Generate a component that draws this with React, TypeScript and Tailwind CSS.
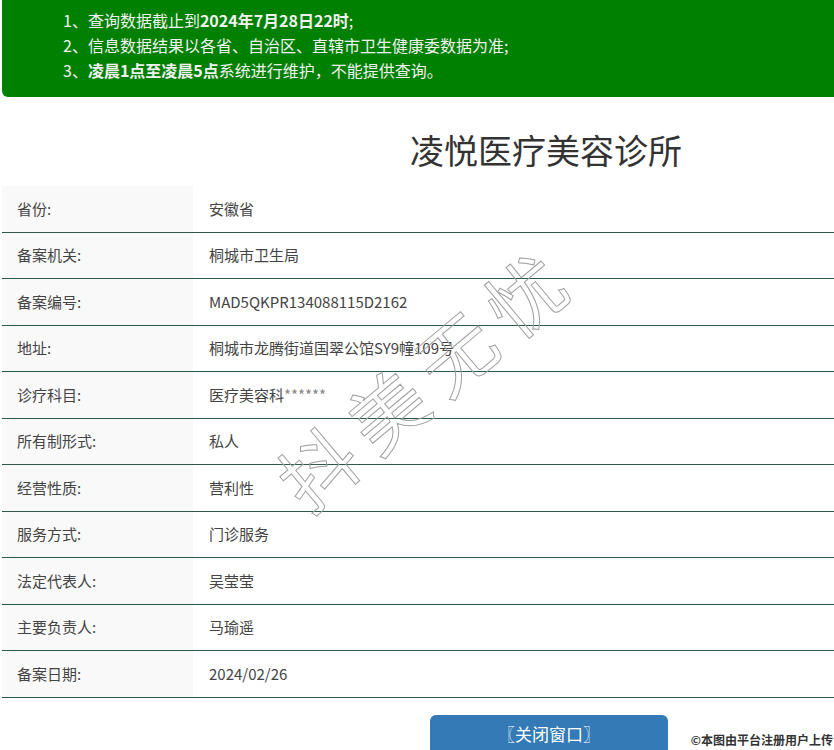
import React from "react";

const rows: [string, React.ReactNode][] = [
  ["省份:", "安徽省"],
  ["备案机关:", "桐城市卫生局"],
  ["备案编号:", "MAD5QKPR134088115D2162"],
  ["地址:", "桐城市龙腾街道国翠公馆SY9幢109号"],
  ["诊疗科目:", (<>医疗美容科<span className="text-[#888]">******</span></>)],
  ["所有制形式:", "私人"],
  ["经营性质:", "营利性"],
  ["服务方式:", "门诊服务"],
  ["法定代表人:", "吴莹莹"],
  ["主要负责人:", "马瑜遥"],
  ["备案日期:", "2024/02/26"],
];

export default function App() {
  return (
    <div className="relative h-[750px] w-[834px] overflow-hidden bg-white font-['Noto_Sans_CJK_SC',sans-serif] text-[#333]">
      <div className="ml-[2px] h-[97px] rounded-bl-md bg-[#008000] pl-[61px] pt-[8px] text-[16px] leading-[25px] text-[#f2f2f2]">
        <p>1、查询数据截止到<b className="font-bold">2024年7月28日22时</b>;</p>
        <p>2、信息数据结果以各省、自治区、直辖市卫生健康委数据为准;</p>
        <p>3、<b className="font-bold">凌晨1点至凌晨5点</b>系统进行维护，不能提供查询。</p>
      </div>

      <h1 className="pl-[410px] pt-[30px] text-[34px] leading-[46px] text-[#333]">凌悦医疗美容诊所</h1>

      <div className="ml-[2px] mt-[13px]">
        {rows.map(([label, value], i) => (
          <div key={i} className="flex h-[46.5px] border-b border-[#2b5a4b] text-[15px]">
            <div className="flex w-[191px] items-center bg-[#f9f9f9] pl-[15px] text-[#444]">{label}</div>
            <div className="flex items-center pl-[16px] text-[#444]">{value}</div>
          </div>
        ))}
      </div>

      <div className="ml-[430px] mt-[17px] flex h-[40px] w-[238px] items-center justify-center rounded-t-md bg-[#337ab7] pb-[2px] text-[17px] text-white">
        〖关闭窗口〗
      </div>

      <div className="pointer-events-none absolute left-[245px] top-[337px] rotate-[-40deg] whitespace-nowrap text-[76px] leading-none tracking-[14px] text-transparent [-webkit-text-stroke:1px_#a0a0a0]">
        抖美无忧
      </div>

      <div className="absolute bottom-[1px] right-[1px] text-[12px] font-bold text-[#333] [text-shadow:0_0_2px_#fff,0_0_2px_#fff]">
        ©本图由平台注册用户上传
      </div>
    </div>
  );
}
